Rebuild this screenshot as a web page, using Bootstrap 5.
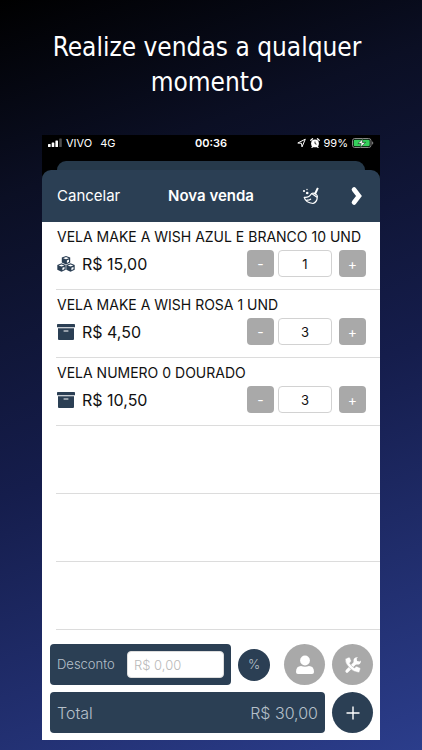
<!DOCTYPE html>
<html lang="pt-BR">
<head>
<meta charset="utf-8">
<meta name="viewport" content="width=device-width, initial-scale=1">
<title>Nova venda</title>
<link href="https://cdn.jsdelivr.net/npm/bootstrap@5.3.0/dist/css/bootstrap.min.css" rel="stylesheet">
<style>
:root { --navy: #2b3f54; --grey: #a9a9a9; }
body { font-family: Inter, "Liberation Sans", sans-serif; color: #111; background: linear-gradient(160deg, #000 0%, #0b0f24 22%, #151d4c 55%, #2b3d8b 100%); }
.promo { font: 400 26px/35px "DejaVu Sans Condensed", "Noto Sans", sans-serif; padding: 30px 40px 35px 32px; }
.phone { margin: 0 42px 10px; background: #000; }
.status { height: 26px; padding: 0 6px; font-size: 11px; line-height: 16px; }
.status > div { flex: 1 1 0; }
.sheet-back { height: 18px; margin: 0 15px -9px; background: #26394a; border-radius: 9px 9px 0 0; }
.sheet { position: relative; }
.sheet-body { background: #fff; }
.topbar { height: 52px; padding: 0 15px; background: var(--navy); border-radius: 9px 9px 0 0; font-size: 15px; }
.topbar > div { flex: 1 1 0; }
.topbar h2 { font-size: 15px; }
.plain { background: none; border: 0; padding: 0; color: inherit; line-height: 20px; }
.topbar-next { margin-left: 27px; }
.sale-row { height: 68px; margin-left: 14px; border-bottom: 1px solid #dcdcdc; padding: 0 14px 0 1px; }
.sale-name { font-size: 14px; line-height: 20px; padding-top: 5px; margin-bottom: 3px; white-space: nowrap; }
.price { font-size: 16px; line-height: 26px; margin-left: 7px; }
.step { width: 27px; height: 27px; padding: 0; border: 0; border-radius: 4px; background: var(--grey); color: #fff; font-size: 14px; line-height: 27px; }
.qty { width: 54px; height: 27px; margin: 0 7px 0 4px; padding: 0; border: 1px solid #d2d2d2; border-radius: 4px; font-size: 13px; text-align: center; color: #111; }
.foot { padding: 14px 7px 7px 8px; gap: 7px; }
.panel { height: 41px; padding: 0 7px; background: var(--navy); border-radius: 4px; color: #b6c0ca; font-weight: 300; }
.panel label { font-size: 13px; }
.discount { width: 97px; height: 27px; padding: 0 6px; border: 1px solid #ddd; border-radius: 4px; font-size: 13px; font-weight: 300; }
.discount::placeholder { color: #b9b9b9; }
.round { width: 41px; height: 41px; flex: none; padding: 0; border: 0; border-radius: 50%; background: var(--grey); color: #fff; display: flex; align-items: center; justify-content: center; }
.round-sm { width: 32px; height: 32px; margin: 0 14px 0 7px; background: var(--navy); color: #b6c0ca; font-size: 13px; font-weight: 300; }
.round-end { margin-left: 7px; }
.round-navy { background: var(--navy); }
.total { font-size: 16px; }
svg { display: block; flex: none; }
</style>
<script src="https://cdn.jsdelivr.net/npm/bootstrap@5.3.0/dist/js/bootstrap.bundle.min.js"></script>
</head>
<body class="min-vh-100 d-flex flex-column">
<svg width="0" height="0" class="position-absolute" aria-hidden="true">
  <symbol id="box" viewBox="0 0 18 16"><path fill="#2b3f54" d="M0 .8Q0 0 .8 0h16.4q.8 0 .8.8V3.300H0zM1 4.300h16V15q0 1-1 1H2q-1 0-1-1z"/><path stroke="#fff" stroke-width="1" stroke-linecap="round" d="M7 7h4"/></symbol>
  <symbol id="cubes" viewBox="0 0 18 16">
    <g id="cube"><path fill="#2b3f54" d="M9 0l4.200 1.600v4.900L9 8.500 4.800 6.500V1.600z"/><path fill="#fff" d="M9 1.100l2.900 1.100L9 3.300 6.100 2.200zM9.900 4.500l2.100-.9v2.200l-2.100 1.100z"/></g>
    <use href="#cube" x="-4.500" y="7.300"/><use href="#cube" x="4.500" y="7.300"/>
  </symbol>
</svg>
<h1 class="promo m-0 text-center text-white">Realize vendas a qualquer momento</h1>
<main class="phone flex-grow-1 d-flex flex-column">
  <div class="status d-flex align-items-start text-white">
    <div class="d-flex align-items-center gap-1">
      <svg width="14" height="16" viewBox="0 0 14 16" fill="#fff"><rect y="9" width="2.600" height="3" rx=".6"/><rect x="3.700" y="7.500" width="2.600" height="4.500" rx=".6"/><rect x="7.400" y="5.500" width="2.600" height="6.500" rx=".6"/><rect x="11.200" y="3.500" width="2.600" height="8.500" rx=".6" opacity=".3"/></svg>
      <span>VIVO</span><span class="ms-1">4G</span>
    </div>
    <span class="fw-semibold">00:36</span>
    <div class="d-flex align-items-center justify-content-end gap-1">
      <svg width="9" height="10" viewBox="0 0 9 10"><path d="M.8 5L8.300 1.200 5 8.900 4.500 5.300z" fill="none" stroke="#fff" stroke-linejoin="round"/></svg>
      <svg width="10" height="10" viewBox="0 0 10 10"><circle cx="5" cy="5.400" r="3.900" fill="#fff"/><path d="M.8 2.300L2.500.8M9.200 2.300L7.500.8M2 9.400l1-1M8 9.400l-1-1" stroke="#fff" stroke-width="1.300" stroke-linecap="round"/><path d="M5 3.500v2.100l1.500.6" fill="none" stroke="#000" stroke-width=".8"/></svg>
      <span>99%</span>
      <svg width="22" height="10" viewBox="0 0 22 10"><rect x=".5" y=".5" width="18.500" height="9" rx="2.300" fill="none" stroke="#888"/><rect x="1.700" y="1.700" width="16" height="6.600" rx="1.300" fill="#35cf5b"/><path d="M20 3.300q1.300.5 1.300 1.700T20 6.700z" fill="#777"/><path d="M11 .7L5.900 5.600h3.300L8.200 9.400l5.400-5h-3.400z" fill="#fff" stroke="#0a2812" stroke-width=".6"/></svg>
    </div>
  </div>
  <div class="sheet-back"></div>
  <section class="sheet flex-grow-1 d-flex flex-column">
    <header class="topbar d-flex align-items-center text-white">
      <div><button class="plain" type="button">Cancelar</button></div>
      <h2 class="m-0 fw-semibold">Nova venda</h2>
      <div class="d-flex justify-content-end align-items-center">
        <button class="plain" type="button" aria-label="Limpar"><svg width="18" height="18" viewBox="0 0 18 18" fill="none" stroke="#fff" stroke-width="1.200" stroke-linecap="round" stroke-linejoin="round"><path d="M16 1.500l-2.500 5.500M15.300 1.200l-2.700 5.500M9.700 6.500q1.500-.9 3 .1l2 1.300q1 1 .6 2.500zM9.200 7q-2 3.800-7 3.300 1.500 5.300 8.800 6.200 4-1.500 4.200-5.600M5 13.200q2.300.1 3.600-1"/><g fill="#fff" stroke="none"><circle cx="2" cy="4" r="1.100"/><circle cx="5.200" cy="6" r="1.300"/><circle cx="5" cy="2.500" r=".7"/></g></svg></button>
        <button class="plain topbar-next" type="button" aria-label="Avançar"><svg width="18" height="22" viewBox="0 0 18 22"><path d="M7 4.500l5 6.500-5 6.500" fill="none" stroke="#fff" stroke-width="4.600" stroke-linecap="round"/></svg></button>
      </div>
    </header>
    <div class="sheet-body flex-grow-1">
      <div class="sale-row"><div class="sale-name">VELA MAKE A WISH AZUL E BRANCO 10 UND</div>
        <div class="d-flex align-items-center"><svg width="18" height="16"><use href="#cubes"/></svg><span class="price me-auto">R$ 15,00</span><button class="step" type="button">-</button><input class="qty" aria-label="Quantidade" value="1"><button class="step" type="button">+</button></div></div>
      <div class="sale-row"><div class="sale-name">VELA MAKE A WISH ROSA 1 UND</div>
        <div class="d-flex align-items-center"><svg width="18" height="16"><use href="#box"/></svg><span class="price me-auto">R$ 4,50</span><button class="step" type="button">-</button><input class="qty" aria-label="Quantidade" value="3"><button class="step" type="button">+</button></div></div>
      <div class="sale-row"><div class="sale-name">VELA NUMERO 0 DOURADO</div>
        <div class="d-flex align-items-center"><svg width="18" height="16"><use href="#box"/></svg><span class="price me-auto">R$ 10,50</span><button class="step" type="button">-</button><input class="qty" aria-label="Quantidade" value="3"><button class="step" type="button">+</button></div></div>
      <div class="sale-row"></div><div class="sale-row"></div><div class="sale-row"></div>
    </div>
    <footer class="foot sheet-body d-flex flex-column">
      <div class="d-flex align-items-center">
        <div class="panel flex-grow-1 d-flex align-items-center justify-content-between"><label for="discount">Desconto</label><input id="discount" class="discount" placeholder="R$ 0,00"></div>
        <button class="round round-sm" type="button">%</button>
        <button class="round" type="button" aria-label="Cliente"><svg width="20" height="20" viewBox="0 0 20 20" fill="#fff"><circle cx="10" cy="5.500" r="4.900"/><path d="M1 17q0-6 5-6 4 1.500 8 0 5 0 5 6 0 2-2 2H3q-2 0-2-2z"/></svg></button>
        <button class="round round-end" type="button" aria-label="Serviços"><svg width="18" height="18" viewBox="0 0 18 18" fill="none"><path d="M3 15.200L12 6.200" stroke="#fff" stroke-width="3.200" stroke-linecap="round"/><circle cx="13.200" cy="4.900" r="3.700" fill="#fff"/><path d="M13 5L12.700 2.500 15.500-.5 19 2.500 15.800 5.500z" fill="#a9a9a9"/><path d="M2 2.400L4.800 1.200q.8-.2 1.200.6l1.200 2.800q.2.700-.3 1.200L5.600 7q1.600 3.200 4.900 5l1.300-1.400q.5-.5 1.200-.2l2.900 1.400q.7.300.5 1.100l-.8 2.900q-.2.700-1 .7Q10 16.400 5.400 11.800T1.300 3.300q0-.7.700-.9z" fill="#fff" stroke="#a9a9a9" stroke-width=".5"/></svg></button>
      </div>
      <div class="d-flex align-items-center">
        <div class="panel total flex-grow-1 d-flex align-items-center justify-content-between"><span>Total</span><span>R$ 30,00</span></div>
        <button class="round round-navy round-end" type="button" aria-label="Adicionar"><svg width="14" height="14" viewBox="0 0 14 14"><path d="M7 .5v13M.5 7h13" stroke="#fff" stroke-width="1.400"/></svg></button>
      </div>
    </footer>
  </section>
</main>
</body>
</html>
